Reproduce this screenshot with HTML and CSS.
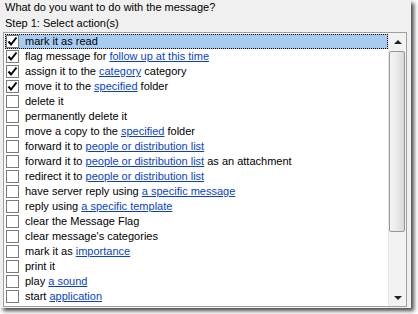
FILE: index.html
```html
<!DOCTYPE html>
<html>
<head>
<meta charset="utf-8">
<link rel="stylesheet" href="styles.css">
</head>
<body>
<div class="panel">
  <div class="title">What do you want to do with the message?</div>
  <div class="step">Step 1: Select action(s)</div>
  <div class="listbox">
    <div class="rows">
      <div class="row sel"><span class="cb"><svg viewBox="0 0 11 11" width="11" height="11"><path d="M1.5 5.5 L4 8.5 L9.5 1.5" fill="none" stroke="#000" stroke-width="2"/></svg></span><span>mark it as read</span></div>
      <div class="row"><span class="cb"><svg viewBox="0 0 11 11" width="11" height="11"><path d="M1.5 5.5 L4 8.5 L9.5 1.5" fill="none" stroke="#000" stroke-width="2"/></svg></span><span>flag message for <a>follow up at this time</a></span></div>
      <div class="row"><span class="cb"><svg viewBox="0 0 11 11" width="11" height="11"><path d="M1.5 5.5 L4 8.5 L9.5 1.5" fill="none" stroke="#000" stroke-width="2"/></svg></span><span>assign it to the <a>category</a> category</span></div>
      <div class="row"><span class="cb"><svg viewBox="0 0 11 11" width="11" height="11"><path d="M1.5 5.5 L4 8.5 L9.5 1.5" fill="none" stroke="#000" stroke-width="2"/></svg></span><span>move it to the <a>specified</a> folder</span></div>
      <div class="row"><span class="cb"></span><span>delete it</span></div>
      <div class="row"><span class="cb"></span><span>permanently delete it</span></div>
      <div class="row"><span class="cb"></span><span>move a copy to the <a>specified</a> folder</span></div>
      <div class="row"><span class="cb"></span><span>forward it to <a>people or distribution list</a></span></div>
      <div class="row"><span class="cb"></span><span>forward it to <a>people or distribution list</a> as an attachment</span></div>
      <div class="row"><span class="cb"></span><span>redirect it to <a>people or distribution list</a></span></div>
      <div class="row"><span class="cb"></span><span>have server reply using <a>a specific message</a></span></div>
      <div class="row"><span class="cb"></span><span>reply using <a>a specific template</a></span></div>
      <div class="row"><span class="cb"></span><span>clear the Message Flag</span></div>
      <div class="row"><span class="cb"></span><span>clear message's categories</span></div>
      <div class="row"><span class="cb"></span><span>mark it as <a>importance</a></span></div>
      <div class="row"><span class="cb"></span><span>print it</span></div>
      <div class="row"><span class="cb"></span><span>play <a>a sound</a></span></div>
      <div class="row"><span class="cb"></span><span>start <a>application</a></span></div>
    </div>
    <div class="scrollbar">
      <div class="sbtn"><span class="arrow up"></span></div>
      <div class="track"><div class="thumb"></div></div>
      <div class="sbtn"><span class="arrow down"></span></div>
    </div>
  </div>
</div>
</body>
</html>
```

FILE: styles.css
```css
html, body {
  margin: 0;
  padding: 0;
  background: #ffffff;
}
body {
  width: 418px;
  height: 314px;
  overflow: hidden;
  font-family: "Liberation Sans", Arial, sans-serif;
  font-size: 11px;
  color: #000;
}
.panel {
  width: 411px;
  height: 308px;
  background: #f0f0f0;
  box-shadow: 3px 3px 4px rgba(0, 0, 0, 0.7);
  display: flex;
  flex-direction: column;
}
.title {
  line-height: 14px;
  padding-left: 5px;
  white-space: nowrap;
}
.step {
  line-height: 18px;
  padding-left: 5px;
  white-space: nowrap;
}
.listbox {
  margin: 0 0 0 3px;
  width: 402px;
  height: 273px;
  border: 1px solid #a0a0a0;
  background: #fff;
  display: flex;
  overflow: hidden;
}
.rows {
  flex: 1;
  padding: 1px 0 0 1px;
  overflow: hidden;
}
.row {
  height: 15px;
  display: flex;
  align-items: center;
  line-height: 15px;
  white-space: nowrap;
  box-sizing: border-box;
}
.row.sel {
  background: #a8ccf1;
  outline: 1px dotted #000;
  outline-offset: -1px;
}
.cb {
  width: 11px;
  height: 11px;
  border: 1px solid #7a7a7a;
  background: #fff;
  margin: 0 6px 0 1px;
  flex: none;
  display: flex;
}
.cb svg {
  display: block;
}
a {
  color: #0a3fc8;
  text-decoration: underline;
}
.scrollbar {
  width: 17px;
  flex: none;
  display: flex;
  flex-direction: column;
  background: #f2f2f2;
  border-left: 1px solid #e8e8e8;
}
.sbtn {
  height: 17px;
  flex: none;
  display: flex;
  align-items: center;
  justify-content: center;
}
.arrow {
  width: 0;
  height: 0;
  border-left: 4px solid transparent;
  border-right: 4px solid transparent;
}
.arrow.up {
  border-bottom: 4px solid #222;
}
.arrow.down {
  border-top: 4px solid #222;
}
.track {
  flex: 1;
  padding-top: 1px;
}
.thumb {
  height: 181px;
  margin: 0 1px 0 0;
  border: 1px solid #979797;
  border-radius: 2px;
  background: linear-gradient(to right, #f4f4f4 0%, #ececec 45%, #d8d8d8 100%);
  box-sizing: border-box;
}
```
